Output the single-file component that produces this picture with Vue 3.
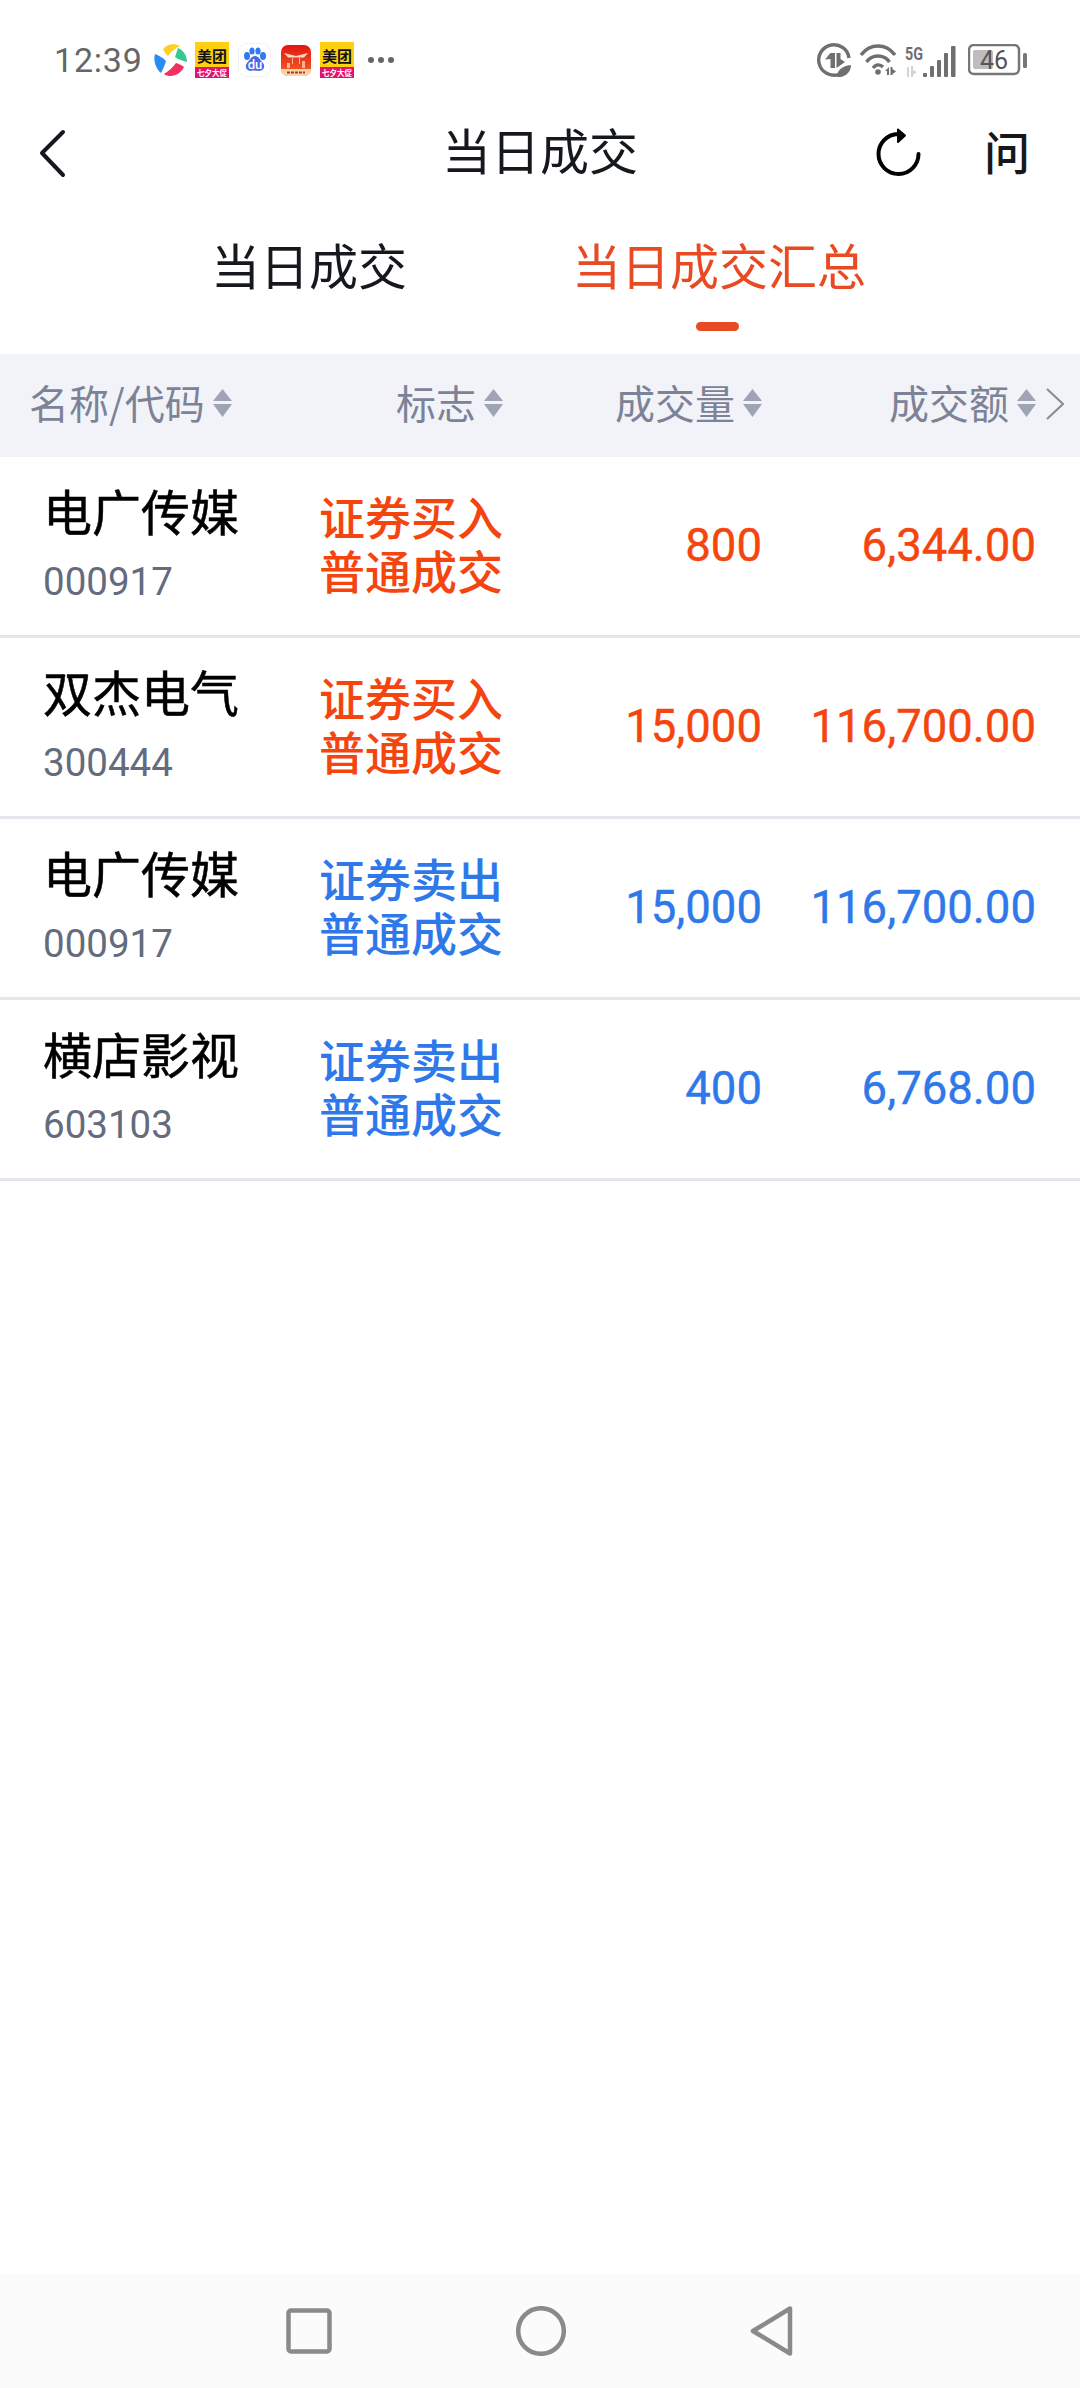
<template>
  <div class="page">
    <div class="status-bar">
      <div class="status-left">
        <span class="time">12:39</span>
        <svg class="ic-a" width="33" height="34" viewBox="0 0 33 34">
          <path d="M9 6C13 1 20 0 26 3C22 5 17 8 14 13C12 11 10 9 9 6Z" fill="#ffcf1f" />
          <path d="M24 5C29 7 33 12 33 19C30 18 25 17 21 14C22 11 23 8 24 5Z" fill="#35c98f" />
          <path d="M10 31C15 28 19 24 22 20C25 21 28 22 30 24C27 31 17 36 10 31Z" fill="#f0305f" />
          <path d="M1 11C4 12 8 14 12 18C11 22 9 26 7 30C2 26 -1 18 1 11Z" fill="#2a8cf0" />
        </svg>
        <svg class="ic-b" width="34" height="36" viewBox="0 0 34 36">
          <rect width="34" height="25" fill="#ffd00f" />
          <rect y="25" width="34" height="11" fill="#e4116e" />
          <text x="17" y="20" text-anchor="middle" class="mt-title">美团</text>
          <text x="17" y="34" text-anchor="middle" class="mt-sub">七夕大促</text>
        </svg>
        <svg class="ic-c" width="33" height="34" viewBox="0 0 33 34">
          <rect x="0.5" y="0.5" width="32" height="33" rx="8" fill="#fff" stroke="#f0f1f4" />
          <ellipse cx="9" cy="13" rx="3" ry="4" fill="#2f7bee" />
          <ellipse cx="14" cy="8" rx="2.6" ry="3.6" fill="#2f7bee" />
          <ellipse cx="20" cy="8" rx="2.6" ry="3.6" fill="#2f7bee" />
          <ellipse cx="25" cy="13" rx="3" ry="4" fill="#2f7bee" />
          <path d="M17 13C21 13 22 17 25 20C28 24 25 28 21 28C18 28 16 27 13 28C9 28 6 24 9 20C12 17 13 13 17 13Z" fill="#4a69e8" />
          <text x="17" y="26" text-anchor="middle" class="du">du</text>
        </svg>
        <svg class="ic-d" width="30" height="31" viewBox="0 0 30 31">
          <defs>
            <linearGradient id="redApp" x1="0" y1="0" x2="0" y2="1">
              <stop offset="0" stop-color="#e3170f" />
              <stop offset="1" stop-color="#f4622c" />
            </linearGradient>
          </defs>
          <rect width="30" height="31" rx="7" fill="url(#redApp)" />
          <path d="M0 24H30A7 7 0 0 1 23 31H7A7 7 0 0 1 0 24Z" fill="#fbd7a8" />
          <path d="M3 8L15 11L27 8L23 12.5H7Z" fill="#ffd9c4" />
          <path d="M11 13H12V19H11ZM18 13H19V19H18ZM6 18H9V23H6ZM21 16H24V23H21Z" fill="#ffb78f" />
          <path d="M6 27.5H24" stroke="#b5372a" stroke-width="2" stroke-dasharray="3 1" />
        </svg>
        <svg class="ic-c" width="34" height="36" viewBox="0 0 34 36">
          <rect width="34" height="25" fill="#ffd00f" />
          <rect y="25" width="34" height="11" fill="#e4116e" />
          <text x="17" y="20" text-anchor="middle" class="mt-title">美团</text>
          <text x="17" y="34" text-anchor="middle" class="mt-sub">七夕大促</text>
        </svg>
        <svg class="ic-e" width="26" height="8" viewBox="0 0 26 8">
          <circle cx="3" cy="4" r="3" fill="#666" />
          <circle cx="13" cy="4" r="3" fill="#666" />
          <circle cx="23" cy="4" r="3" fill="#666" />
        </svg>
      </div>
      <div class="status-right">
        <svg width="34" height="34" viewBox="0 0 34 34">
          <path d="M21 31.6A15.2 15.2 0 1 1 32 15" fill="none" stroke="#6f6f6f" stroke-width="3.4" />
          <path d="M18 10V25H13.5V16L8 16.5L13.5 10ZM19.5 10H23.5V16L28 19L19.5 25Z" fill="#6f6f6f" />
          <path d="M20 34C20 27 25 23 34 22C34 29 28 35 20 34Z" fill="#6f6f6f" />
        </svg>
        <svg width="36" height="32" viewBox="0 0 36 32">
          <g fill="none" stroke="#6f6f6f" stroke-width="3.4">
            <path d="M1 11C10 -1 26 -1 35 11" />
            <path d="M6.5 18C12 10 24 10 29.5 18" />
            <path d="M13 24C16 20 20 20 23 23" />
          </g>
          <circle cx="18" cy="28" r="2.8" fill="#6f6f6f" />
          <path d="M25 27L29 23V31H27V27ZM30.5 23H32.5V25L36 27.5L32.5 30V31H30.5Z" fill="#6f6f6f" />
        </svg>
        <svg width="51" height="35" viewBox="0 -3 51 35">
          <text x="0" y="14" class="five-g" textLength="18" lengthAdjust="spacingAndGlyphs">5G</text>
          <path d="M1 23L4 20V31H2V23ZM6 20H8V24L12 26L8 29V31H6Z" fill="#d4d4d4" />
          <g fill="#6f6f6f">
            <rect x="18" y="27" width="4" height="4" rx="1" />
            <rect x="25" y="20" width="4" height="11" rx="1" />
            <rect x="32" y="14" width="4" height="17" rx="1" />
            <rect x="39" y="7" width="4" height="24" rx="1" />
            <rect x="46" y="0" width="4.5" height="31" rx="1" />
          </g>
        </svg>
        <svg class="battery" width="60" height="32" viewBox="0 0 60 32">
          <rect x="1" y="1" width="50" height="29" rx="5" fill="#fff" stroke="#777" stroke-width="2.5" />
          <rect x="5" y="6" width="20" height="19" rx="2" fill="#bdbdbd" />
          <text x="26" y="25" text-anchor="middle" class="batt">46</text>
          <rect x="55" y="9" width="4" height="15" rx="1.5" fill="#777" />
        </svg>
      </div>
    </div>

    <div class="nav-bar">
      <div class="nav-left">
        <svg width="30" height="50" viewBox="0 0 30 50">
          <path d="M25 4L4 25L25 47" fill="none" stroke="#15181d" stroke-width="4" stroke-linecap="round" stroke-linejoin="round" />
        </svg>
      </div>
      <div class="nav-title">当日成交</div>
      <div class="nav-right">
        <svg width="46" height="50" viewBox="0 0 46 50">
          <path d="M42.5 26A20 20 0 1 1 22 6" fill="none" stroke="#000" stroke-width="4" stroke-linecap="round" />
          <path d="M22 1.5L29 7.5L22 14Z" fill="#000" stroke="#000" stroke-width="2" stroke-linejoin="round" />
        </svg>
        <span class="ask">问</span>
      </div>
    </div>

    <div class="tabs">
      <div class="tab">当日成交</div>
      <div class="tab active">
        当日成交汇总
        <span class="tab-line"></span>
      </div>
    </div>

    <div class="head">
      <div class="head-cell first">名称/代码<svg class="sort" width="19" height="28" viewBox="0 0 19 28"><path d="M9.5 0L19 12H0ZM0 15H19L9.5 28Z" fill="#9ea4b5" /></svg></div>
      <div class="head-cell">标志<svg class="sort" width="19" height="28" viewBox="0 0 19 28"><path d="M9.5 0L19 12H0ZM0 15H19L9.5 28Z" fill="#9ea4b5" /></svg></div>
      <div class="head-cell">成交量<svg class="sort" width="19" height="28" viewBox="0 0 19 28"><path d="M9.5 0L19 12H0ZM0 15H19L9.5 28Z" fill="#9ea4b5" /></svg></div>
      <div class="head-cell">成交额<svg class="sort" width="19" height="28" viewBox="0 0 19 28"><path d="M9.5 0L19 12H0ZM0 15H19L9.5 28Z" fill="#9ea4b5" /></svg></div>
      <svg class="more" width="18" height="32" viewBox="0 0 18 32">
        <path d="M1 1L17 16L1 31" fill="none" stroke="#868b9a" stroke-width="2" />
      </svg>
    </div>

    <div v-for="row in rows" :key="row.id" class="row" :class="row.side">
      <div class="name-cell">
        <div class="name">{{ row.name }}</div>
        <div class="code">{{ row.code }}</div>
      </div>
      <div class="mark">{{ row.mark }}<br />普通成交</div>
      <div class="num">{{ row.volume }}</div>
      <div class="num">{{ row.amount }}</div>
    </div>

    <div class="spacer"></div>

    <div class="sys-nav">
      <svg width="46" height="46" viewBox="0 0 46 46">
        <rect x="2.5" y="2.5" width="41" height="41" rx="2.5" fill="none" stroke="#8a8a8a" stroke-width="4.5" />
      </svg>
      <svg width="50" height="50" viewBox="0 0 50 50">
        <circle cx="25" cy="25" r="22.8" fill="none" stroke="#8a8a8a" stroke-width="4.5" />
      </svg>
      <svg width="44" height="52" viewBox="0 0 44 52">
        <path d="M40 3.5V48.5L3 26Z" fill="none" stroke="#8a8a8a" stroke-width="4.5" stroke-linejoin="round" />
      </svg>
    </div>
  </div>
</template>

<script setup>
const rows = [
  { id: 1, name: '电广传媒', code: '000917', mark: '证券买入', volume: '800', amount: '6,344.00', side: 'buy' },
  { id: 2, name: '双杰电气', code: '300444', mark: '证券买入', volume: '15,000', amount: '116,700.00', side: 'buy' },
  { id: 3, name: '电广传媒', code: '000917', mark: '证券卖出', volume: '15,000', amount: '116,700.00', side: 'sell' },
  { id: 4, name: '横店影视', code: '603103', mark: '证券卖出', volume: '400', amount: '6,768.00', side: 'sell' },
]
</script>

<style>
html,
body {
  margin: 0;
  background: #fff;
}
</style>

<style scoped>
.page {
  width: 1080px;
  height: 2388px;
  display: flex;
  flex-direction: column;
  background: #fff;
  font-family: "Noto Sans CJK SC", "Noto Sans", sans-serif;
  overflow: hidden;
}

.status-bar {
  height: 100px;
  padding: 20px 52px 0 54px;
  box-sizing: border-box;
  display: flex;
  justify-content: space-between;
  align-items: center;
  flex: none;
}

.status-left,
.status-right {
  display: flex;
  align-items: center;
}

.status-right {
  gap: 9px;
}

.battery {
  margin-left: 3px;
}

.time {
  font-family: Roboto, sans-serif;
  font-size: 34px;
  letter-spacing: 0.8px;
  color: #666;
  width: 100px;
}

.ic-b {
  margin-left: 8px;
}

.ic-c {
  margin-left: 9px;
}

.ic-d {
  margin-left: 10px;
}

.ic-e {
  margin-left: 14px;
}

.mt-title {
  font-size: 15px;
  font-weight: 700;
  fill: #111;
}

.mt-sub {
  font-size: 7.5px;
  font-weight: 700;
  fill: #fff;
}

.du {
  font-family: Roboto, sans-serif;
  font-size: 13px;
  font-weight: 500;
  fill: #fff;
}

.five-g {
  font-family: Roboto, sans-serif;
  font-size: 18px;
  font-weight: 700;
  fill: #6f6f6f;
}

.batt {
  font-family: Roboto, sans-serif;
  font-size: 25px;
  fill: #555;
}

.nav-bar {
  height: 106px;
  padding: 0 44px;
  box-sizing: border-box;
  display: grid;
  grid-template-columns: 1fr auto 1fr;
  align-items: center;
  flex: none;
}

.nav-left {
  display: flex;
  margin-left: -6px;
}

.nav-title {
  font-size: 49px;
  line-height: 60px;
  padding-bottom: 8px;
  color: #15181d;
}

.nav-right {
  display: flex;
  justify-content: flex-end;
  align-items: center;
  gap: 62px;
  padding-right: 6px;
}

.ask {
  font-size: 46px;
  line-height: 50px;
  padding-bottom: 6px;
  font-weight: 500;
  color: #15181d;
}

.tabs {
  height: 148px;
  padding: 28px 0 0 211px;
  box-sizing: border-box;
  display: flex;
  gap: 165px;
  align-items: flex-start;
  flex: none;
}

.tab {
  font-size: 49px;
  line-height: 60px;
  color: #15181d;
  display: flex;
  flex-direction: column;
  align-items: center;
}

.tab.active {
  color: #e84a23;
}

.tab-line {
  width: 43px;
  height: 9px;
  margin-top: 28px;
  margin-right: 3px;
  border-radius: 5px;
  background: #e84a23;
}

.head {
  height: 103px;
  padding-bottom: 7px;
  box-sizing: border-box;
  display: grid;
  grid-template-columns: 322px 181px 259px 274px 1fr;
  align-items: center;
  background: #f1f3f8;
  flex: none;
}

.head-cell {
  display: flex;
  justify-content: flex-end;
  align-items: center;
  font-size: 40px;
  line-height: 50px;
  color: #7d8396;
}

.head-cell.first {
  justify-content: flex-start;
  padding-left: 29px;
}

.sort {
  margin-left: 8px;
  margin-top: 2px;
}

.more {
  margin-left: 10px;
  margin-top: 3px;
}

.row {
  height: 181px;
  box-sizing: border-box;
  border-bottom: 3px solid #e3e6ea;
  display: grid;
  grid-template-columns: 319px 184px 259px 274px;
  align-items: center;
  flex: none;
}

.row.buy {
  color: #f5450f;
}

.row.sell {
  color: #2f78ea;
}

.name-cell {
  padding: 0 0 7px 43px;
}

.name {
  font-size: 49px;
  line-height: 60px;
  -webkit-text-stroke: 0.5px #000;
  color: #000;
}

.code {
  font-family: Roboto, sans-serif;
  font-size: 38.5px;
  line-height: 46px;
  margin-top: 19px;
  color: #636b7d;
}

.mark {
  font-size: 46px;
  line-height: 54px;
  padding-bottom: 9px;
  font-weight: 500;
  white-space: nowrap;
}

.num {
  font-family: Roboto, sans-serif;
  font-size: 45.5px;
  -webkit-text-stroke: 0.4px currentColor;
  padding-bottom: 1px;
  text-align: right;
}

.spacer {
  flex: 1;
}

.sys-nav {
  height: 114px;
  padding-left: 286px;
  box-sizing: border-box;
  display: flex;
  align-items: center;
  gap: 184px;
  background: #fbfbfb;
  flex: none;
}
</style>
